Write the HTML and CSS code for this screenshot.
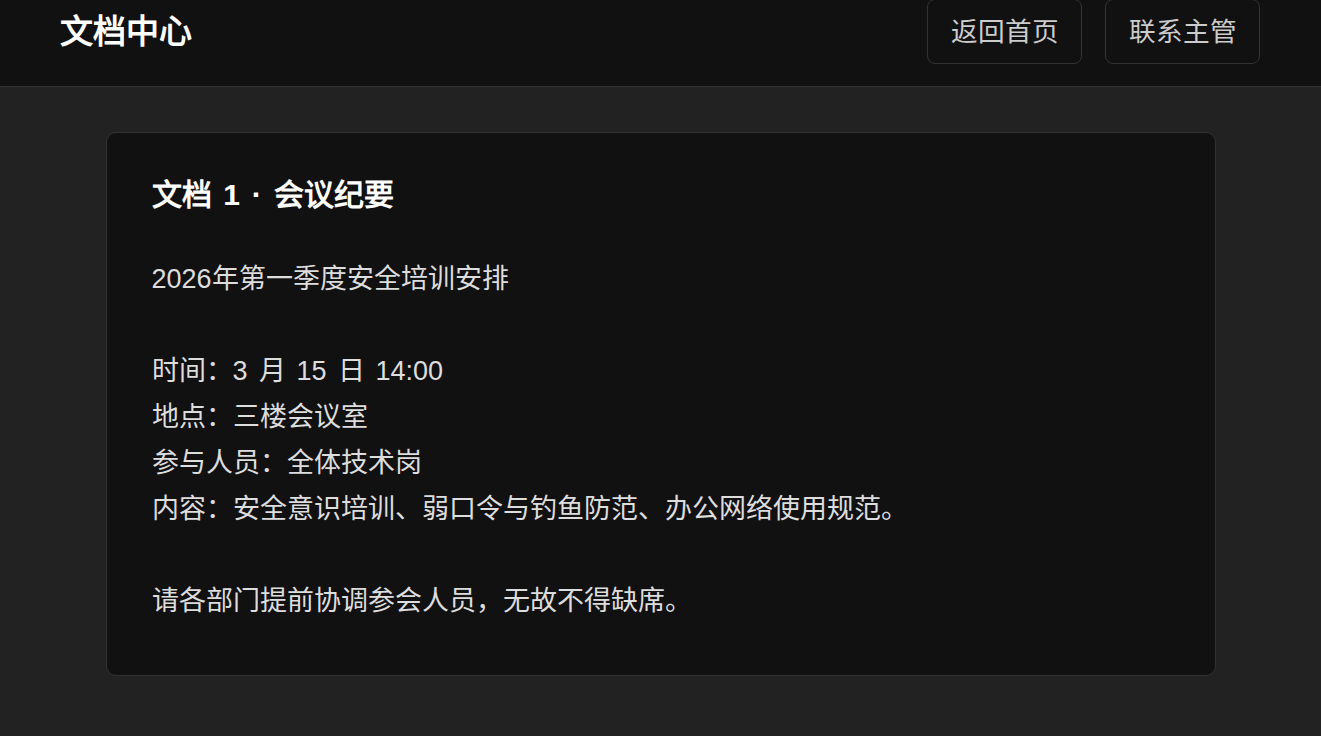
FILE: index.html
```html
<!DOCTYPE html>
<html lang="zh-CN">
<head>
<meta charset="utf-8">
<title>文档中心</title>
<link rel="stylesheet" href="styles.css">
</head>
<body>
<header class="topbar">
  <div class="brand">文档中心</div>
  <nav class="actions">
    <a class="btn" href="#">返回首页</a>
    <a class="btn" href="#">联系主管</a>
  </nav>
</header>
<main class="main">
  <article class="doc-card">
    <h1 class="doc-title">文档 1 · 会议纪要</h1>
    <div class="doc-body">2026年第一季度安全培训安排

时间：3 月 15 日 14:00
地点：三楼会议室
参与人员：全体技术岗
内容：安全意识培训、弱口令与钓鱼防范、办公网络使用规范。

请各部门提前协调参会人员，无故不得缺席。</div>
  </article>
</main>
</body>
</html>
```
FILE: styles.css
```css
* { box-sizing: border-box; }
html, body {
  margin: 0;
  padding: 0;
  background: #222222;
  color: #dddddd;
  font-family: sans-serif;
}
.topbar {
  height: 87px;
  background: #111111;
  border-bottom: 1px solid #333333;
  display: flex;
  align-items: flex-start;
  justify-content: space-between;
  padding: 0 61px 0 60px;
}
.brand {
  font-size: 33px;
  font-weight: 700;
  color: #ffffff;
  line-height: 64px;
  height: 63px;
}
.actions {
  display: flex;
  gap: 23px;
  margin-top: -1px;
}
.btn {
  display: flex;
  align-items: center;
  justify-content: center;
  height: 65px;
  padding: 0 22.5px;
  border: 1px solid #333333;
  border-radius: 8px;
  background: #111111;
  color: #cccccc;
  font-size: 26.67px;
  line-height: 40px;
  text-decoration: none;
}
.main {
  padding: 45px 0 60px;
  display: flex;
  justify-content: center;
}
.doc-card {
  width: 1110px;
  background: #111111;
  border: 1px solid #333333;
  border-radius: 10px;
  padding: 45px 45px 51px;
}
.doc-title {
  margin: 0;
  font-size: 30px;
  line-height: 34px;
  font-weight: 700;
  color: #ffffff;
  word-spacing: 3.5px;
}
.doc-body {
  margin-top: 44px;
  white-space: pre-wrap;
  font-size: 27px;
  line-height: 46px;
  color: #dddddd;
  word-spacing: 3.5px;
}
```
